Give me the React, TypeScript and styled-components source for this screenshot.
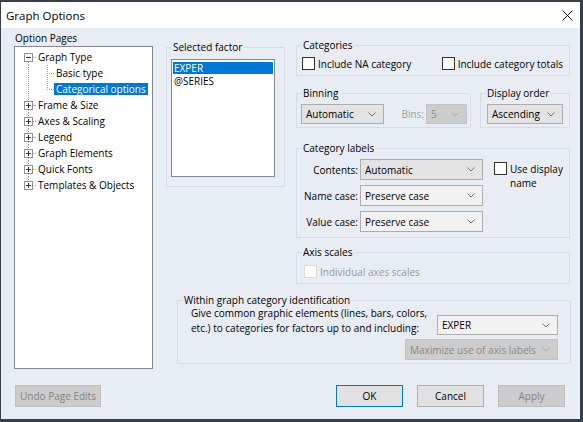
import React from 'react'
import styled, { createGlobalStyle } from 'styled-components'

const GlobalStyle = createGlobalStyle`
  html, body {
    margin: 0;
    padding: 0;
    background: #363e49;
  }
  body {
    font-family: 'Open Sans', 'Liberation Sans', sans-serif;
    font-size: 10px;
    color: #000;
  }
  * { box-sizing: border-box; }
`

const Window = styled.div`
  width: 579px;
  height: 417px;
  margin: 2px 0 0 1px;
  display: flex;
  flex-direction: column;
  background: #e8edf4;
`
const TitleBar = styled.div`
  height: 26px;
  flex: none;
  background: #fff;
  display: flex;
  align-items: center;
  justify-content: space-between;
  padding: 0 7px 0 5px;
  font-size: 11.5px;
`
const Body = styled.div`
  flex: 1;
  display: flex;
  flex-direction: column;
  padding: 3px 9px 0 13px;
`
const MainRow = styled.div`
  display: flex;
  height: 338px;
  gap: 13px;
`
const LeftCol = styled.div`
  width: 139px;
  display: flex;
  flex-direction: column;
`
const PaneLabel = styled.div`
  height: 15px;
  line-height: 14px;
  padding-left: 1px;
`
const TreeBox = styled.div`
  flex: 1;
  background: #fff;
  border: 1px solid #828790;
  padding-top: 2px;
`
const TreeRow = styled.div`
  height: 16px;
  display: flex;
  align-items: center;
`
const TreeLabel = styled.span<{ $selected?: boolean }>`
  padding: 0 2px;
  line-height: 12px;
  white-space: nowrap;
  background: ${p => (p.$selected ? '#0078d7' : 'transparent')};
  color: ${p => (p.$selected ? '#fff' : '#000')};
`
const RightArea = styled.div`
  width: 405px;
  padding-top: 7px;
  display: flex;
  flex-direction: column;
`
const UpperRow = styled.div`
  display: flex;
  gap: 11px;
`
const RightCol = styled.div`
  width: 274px;
  display: flex;
  flex-direction: column;
`
const Group = styled.fieldset<{ $w?: number; $h: number; $mt?: number; $ml?: number }>`
  margin: ${p => p.$mt ?? 0}px 0 0 ${p => p.$ml ?? 0}px;
  padding: 0;
  min-width: 0;
  border: 1px solid #d6dde7;
  width: ${p => (p.$w ? `${p.$w}px` : 'auto')};
  height: ${p => p.$h}px;
  flex: none;
`
const Legend = styled.legend`
  padding: 0 1px;
  margin-left: 5px;
  line-height: 14px;
`
const GroupRow = styled.div<{ $pt?: number; $pl?: number; $pr?: number; $justify?: string }>`
  display: flex;
  align-items: flex-start;
  justify-content: ${p => p.$justify ?? 'flex-start'};
  padding: ${p => p.$pt ?? 0}px ${p => p.$pr ?? 0}px 0 ${p => p.$pl ?? 0}px;
`
const ListBox = styled.div`
  width: 104px;
  height: 118px;
  margin: 5px 0 0 4px;
  background: #fff;
  border: 1px solid #828790;
  padding: 2px 1px;
`
const ListItem = styled.div<{ $selected?: boolean }>`
  height: 12px;
  line-height: 12px;
  margin-bottom: 1px;
  padding-left: 1px;
  background: ${p => (p.$selected ? '#0078d7' : 'transparent')};
  color: ${p => (p.$selected ? '#fff' : '#000')};
`
const CheckLabel = styled.label<{ $disabled?: boolean }>`
  display: flex;
  align-items: flex-start;
  gap: 3px;
  line-height: 14px;
  color: ${p => (p.$disabled ? '#9a9a9a' : '#000')};
`
const Box = styled.span<{ $disabled?: boolean }>`
  width: 13px;
  height: 13px;
  flex: none;
  margin-top: 0px;
  background: #fff;
  border: 1px solid ${p => (p.$disabled ? '#dcdcdc' : '#333')};
`
const ComboBox = styled.div<{ $w: number; $tone?: 'grey' | 'light' | 'off'; $h?: number }>`
  width: ${p => p.$w}px;
  height: ${p => p.$h ?? 20}px;
  flex: none;
  display: flex;
  align-items: center;
  justify-content: space-between;
  padding: 0 7px 0 4px;
  white-space: nowrap;
  border: 1px solid ${p => (p.$tone === 'off' ? '#c4c4c4' : '#adadad')};
  background: ${p => (p.$tone === 'off' ? '#cccccc' : p.$tone === 'light' ? '#f2f2f2' : '#e3e3e3')};
  color: ${p => (p.$tone === 'off' ? '#8a8a8a' : '#000')};
`
const FieldLabel = styled.span<{ $w?: number; $disabled?: boolean }>`
  width: ${p => (p.$w ? `${p.$w}px` : 'auto')};
  text-align: right;
  white-space: nowrap;
  color: ${p => (p.$disabled ? '#a0a0a0' : '#000')};
`
const LabelGrid = styled.div`
  display: flex;
  flex-direction: column;
  gap: 5px;
`
const LabelRow = styled.div`
  display: flex;
  align-items: center;
  gap: 2px;
`
const BinsGroup = styled.div`
  margin-left: auto;
  display: flex;
  align-items: center;
  gap: 2px;
  padding-right: 3px;
`
const Para = styled.div`
  line-height: 15px;
  margin-top: -1px;
`
const ButtonBar = styled.div`
  display: flex;
  align-items: center;
  gap: 14px;
  margin-top: 16px;
  padding: 0 6px 0 1px;
`
const Button = styled.div<{ $w: number; $kind?: 'default' | 'off' }>`
  width: ${p => p.$w}px;
  height: 22px;
  display: flex;
  align-items: center;
  justify-content: center;
  border: 1px solid ${p => (p.$kind === 'default' ? '#0078d7' : p.$kind === 'off' ? '#bfbfbf' : '#adadad')};
  background: ${p => (p.$kind === 'off' ? '#cccccc' : '#e1e1e1')};
  color: ${p => (p.$kind === 'off' ? '#848484' : '#000')};
`
const Spacer = styled.div`
  flex: 1;
`

const Chevron = ({ off }: { off?: boolean }) => (
  <svg width="8" height="5" viewBox="0 0 8 5">
    <polyline points="0.5,0.5 4,4 7.5,0.5" fill="none" stroke={off ? '#a8a8a8' : '#707070'} strokeWidth="1" />
  </svg>
)

const Combo = ({ w, text, tone, h }: { w: number; text: string; tone?: 'grey' | 'light' | 'off'; h?: number }) => (
  <ComboBox $w={w} $tone={tone} $h={h}>
    <span>{text}</span>
    <Chevron off={tone === 'off'} />
  </ComboBox>
)

const Check = ({ label, disabled }: { label: React.ReactNode; disabled?: boolean }) => (
  <CheckLabel $disabled={disabled}>
    <Box $disabled={disabled} />
    <span>{label}</span>
  </CheckLabel>
)

const dot = { stroke: '#a0a0a0', strokeDasharray: '1 1', strokeWidth: 1 }

// tree connector for a root level node
const RootGlyph = ({ first, last, open }: { first?: boolean; last?: boolean; open?: boolean }) => (
  <svg width="21" height="16">
    {!first && <line x1="13.5" y1="0" x2="13.5" y2="4" {...dot} />}
    {!last && <line x1="13.5" y1="13" x2="13.5" y2="16" {...dot} />}
    <line x1="18" y1="8.5" x2="21" y2="8.5" {...dot} />
    <rect x="9.5" y="4.5" width="8" height="8" fill="#fff" stroke="#919191" />
    <line x1="11" y1="8.5" x2="16" y2="8.5" stroke="#333" />
    {!open && <line x1="13.5" y1="6" x2="13.5" y2="11" stroke="#333" />}
  </svg>
)

const ChildGlyph = ({ last }: { last?: boolean }) => (
  <svg width="39" height="16">
    <line x1="13.5" y1="0" x2="13.5" y2="16" {...dot} />
    <line x1="32.5" y1="0" x2="32.5" y2={last ? 9 : 16} {...dot} />
    <line x1="34" y1="8.5" x2="39" y2="8.5" {...dot} />
  </svg>
)

const roots = ['Frame & Size', 'Axes & Scaling', 'Legend', 'Graph Elements', 'Quick Fonts', 'Templates & Objects']

export default function App() {
  return (
    <>
      <GlobalStyle />
      <Window>
        <TitleBar>
          <span>Graph Options</span>
          <svg width="11" height="11" viewBox="0 0 11 11">
            <path d="M0.5 0.5 L10.5 10.5 M10.5 0.5 L0.5 10.5" stroke="#111" strokeWidth="1" />
          </svg>
        </TitleBar>
        <Body>
          <MainRow>
            <LeftCol>
              <PaneLabel>Option Pages</PaneLabel>
              <TreeBox>
                <TreeRow>
                  <RootGlyph first open />
                  <TreeLabel>Graph Type</TreeLabel>
                </TreeRow>
                <TreeRow>
                  <ChildGlyph />
                  <TreeLabel>Basic type</TreeLabel>
                </TreeRow>
                <TreeRow>
                  <ChildGlyph last />
                  <TreeLabel $selected>Categorical options</TreeLabel>
                </TreeRow>
                {roots.map((r, i) => (
                  <TreeRow key={r}>
                    <RootGlyph last={i === roots.length - 1} />
                    <TreeLabel>{r}</TreeLabel>
                  </TreeRow>
                ))}
              </TreeBox>
            </LeftCol>

            <RightArea>
              <UpperRow>
                <Group $w={119} $h={147} $mt={2}>
                  <Legend>Selected factor</Legend>
                  <ListBox>
                    <ListItem $selected>EXPER</ListItem>
                    <ListItem>@SERIES</ListItem>
                  </ListBox>
                </Group>

                <RightCol>
                  <Group $h={38}>
                    <Legend>Categories</Legend>
                    <GroupRow $pt={5} $pl={5} $pr={6} $justify="space-between">
                      <Check label="Include NA category" />
                      <Check label="Include category totals" />
                    </GroupRow>
                  </Group>

                  <GroupRow $pt={10}>
                    <Group $w={175} $h={42}>
                      <Legend>Binning</Legend>
                      <GroupRow $pt={4} $pl={4}>
                        <Combo w={83} text="Automatic" />
                        <BinsGroup>
                          <FieldLabel $disabled>Bins:</FieldLabel>
                          <Combo w={41} text="5" tone="off" />
                        </BinsGroup>
                      </GroupRow>
                    </Group>
                    <Group $w={90} $h={42} $ml={9}>
                      <Legend>Display order</Legend>
                      <GroupRow $pt={4} $pl={6}>
                        <Combo w={76} text="Ascending" />
                      </GroupRow>
                    </Group>
                  </GroupRow>

                  <Group $h={97} $mt={13}>
                    <Legend>Category labels</Legend>
                    <GroupRow $pt={4}>
                      <LabelGrid>
                        <LabelRow>
                          <FieldLabel $w={61}>Contents:</FieldLabel>
                          <Combo w={123} h={21} text="Automatic" />
                        </LabelRow>
                        <LabelRow>
                          <FieldLabel $w={61}>Name case:</FieldLabel>
                          <Combo w={123} h={21} text="Preserve case" tone="light" />
                        </LabelRow>
                        <LabelRow>
                          <FieldLabel $w={61}>Value case:</FieldLabel>
                          <Combo w={123} h={21} text="Preserve case" tone="light" />
                        </LabelRow>
                      </LabelGrid>
                      <GroupRow $pt={3} $pl={11}>
                        <Check
                          label={
                            <>
                              Use display
                              <br />
                              name
                            </>
                          }
                        />
                      </GroupRow>
                    </GroupRow>
                  </Group>

                  <Group $h={39} $mt={7}>
                    <Legend>Axis scales</Legend>
                    <GroupRow $pt={6} $pl={7}>
                      <Check label="Individual axes scales" disabled />
                    </GroupRow>
                  </Group>
                </RightCol>
              </UpperRow>

              <Group $w={394} $h={71} $mt={9} $ml={11}>
                <Legend>Within graph category identification</Legend>
                <GroupRow $pl={13} $pr={12} $justify="space-between">
                  <Para>
                    Give common graphic elements (lines, bars, colors,
                    <br />
                    etc.) to categories for factors up to and including:
                  </Para>
                  <GroupRow $pt={8}>
                    <Combo w={121} text="EXPER" tone="light" />
                  </GroupRow>
                </GroupRow>
                <GroupRow $pt={3} $pr={12} $justify="flex-end">
                  <Combo w={153} h={21} text="Maximize use of axis labels" tone="off" />
                </GroupRow>
              </Group>
            </RightArea>
          </MainRow>

          <ButtonBar>
            <Button $w={86} $kind="off">Undo Page Edits</Button>
            <Spacer />
            <Button $w={67} $kind="default">OK</Button>
            <Button $w={67}>Cancel</Button>
            <Button $w={67} $kind="off">Apply</Button>
          </ButtonBar>
        </Body>
      </Window>
    </>
  )
}
